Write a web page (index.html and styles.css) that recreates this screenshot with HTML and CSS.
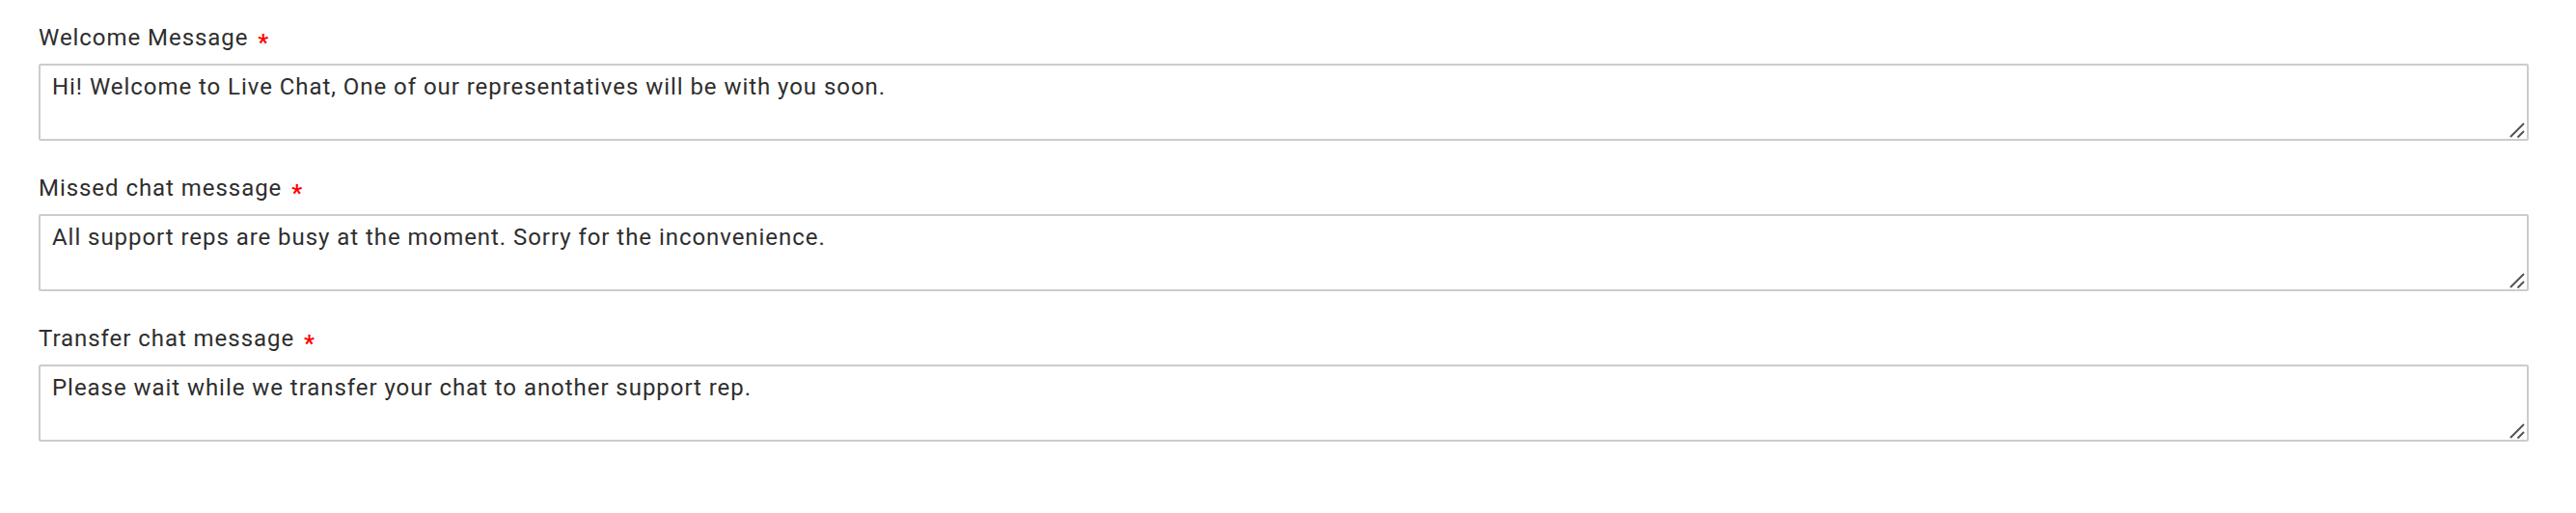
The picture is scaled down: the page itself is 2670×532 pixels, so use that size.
FILE: index.html
```html
<!DOCTYPE html>
<html lang="en">
<head>
  <meta charset="UTF-8" />
  <title>Chat Messages</title>
  <link rel="stylesheet" href="styles.css">
</head>
<body>
  <form class="message-form">
    <div class="form-group">
      <label class="form-label" for="welcome">Welcome Message <span class="required">*</span></label>
      <div class="textarea-wrap">
        <textarea class="form-control" id="welcome">Hi! Welcome to Live Chat, One of our representatives will be with you soon.</textarea>
        <svg class="grip" width="20" height="20" viewBox="0 0 20 20"><path d="M1 16 L15 2 M8.5 16.5 L15 10"/></svg>
      </div>
    </div>

    <div class="form-group">
      <label class="form-label" for="missed">Missed chat message <span class="required">*</span></label>
      <div class="textarea-wrap">
        <textarea class="form-control" id="missed">All support reps are busy at the moment. Sorry for the inconvenience.</textarea>
        <svg class="grip" width="20" height="20" viewBox="0 0 20 20"><path d="M1 16 L15 2 M8.5 16.5 L15 10"/></svg>
      </div>
    </div>

    <div class="form-group">
      <label class="form-label" for="transfer">Transfer chat message <span class="required">*</span></label>
      <div class="textarea-wrap">
        <textarea class="form-control" id="transfer">Please wait while we transfer your chat to another support rep.</textarea>
        <svg class="grip" width="20" height="20" viewBox="0 0 20 20"><path d="M1 16 L15 2 M8.5 16.5 L15 10"/></svg>
      </div>
    </div>
  </form>
</body>
</html>
```

FILE: styles.css
```css
* {
  box-sizing: border-box;
  margin: 0;
  padding: 0;
}

body {
  font-family: 'Roboto', 'Liberation Sans', sans-serif;
  font-size: 24px;
  line-height: 34px;
  letter-spacing: 0.95px;
  color: #2e2e2e;
  background-color: #fff;
}

.message-form {
  padding: 22px 49px 0 40px;
}

.form-group {
  margin-bottom: 32px;
}

.form-label {
  display: block;
  margin-bottom: 10px;
}

.required {
  color: #f00;
  font-weight: bold;
  line-height: 0;
  vertical-align: -5px;
  margin-left: 3px;
}

.textarea-wrap {
  position: relative;
}

.form-control {
  display: block;
  width: 100%;
  height: 80px;
  padding: 5px 12px;
  border: 2px solid #ccc;
  border-radius: 2px;
  font-family: inherit;
  font-size: 24px;
  line-height: 34px;
  letter-spacing: inherit;
  color: #2e2e2e;
  background-color: #fff;
  resize: none;
}

.grip {
  position: absolute;
  right: 0;
  bottom: 0;
  pointer-events: none;
}

.grip path {
  stroke: #555;
  stroke-width: 2;
  fill: none;
}
```
